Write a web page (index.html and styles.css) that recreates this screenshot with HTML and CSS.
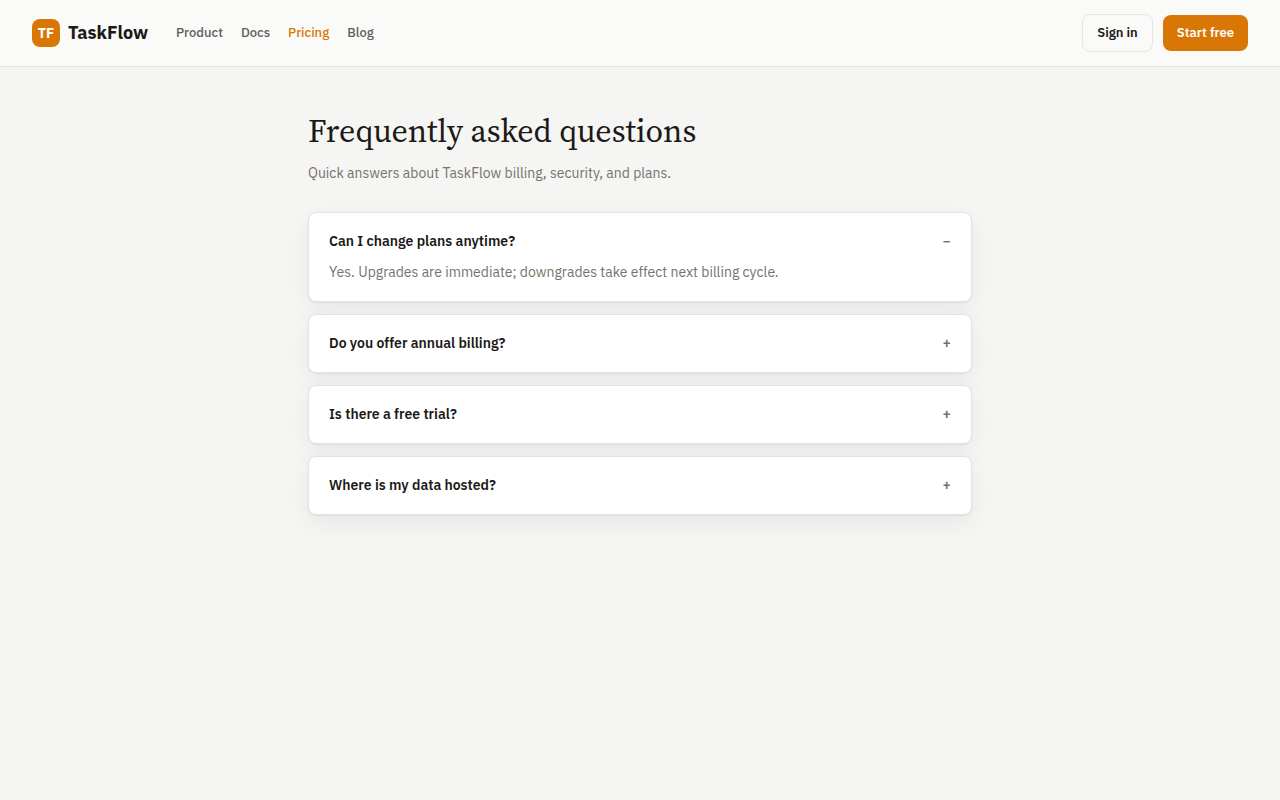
FILE: index.html
```html
<!DOCTYPE html>
<html lang="en">
<head>
    <meta charset="UTF-8">
    <meta name="viewport" content="width=device-width, initial-scale=1.0">
    <title>TaskFlow - Frequently asked questions</title>
    <link rel="stylesheet" href="styles.css">
</head>
<body>
<header class="topbar">
    <a href="#" class="brand">
        <span class="logo">TF</span>
        <span class="brand-name">TaskFlow</span>
    </a>
    <nav class="nav">
        <a href="#">Product</a>
        <a href="#">Docs</a>
        <a href="#" class="active">Pricing</a>
        <a href="#">Blog</a>
    </nav>
    <div class="actions">
        <button type="button" class="btn btn-outline">Sign in</button>
        <button type="button" class="btn btn-primary">Start free</button>
    </div>
</header>

<main class="container">
    <h1>Frequently asked questions</h1>
    <p class="subtitle">Quick answers about TaskFlow billing, security, and plans.</p>

    <!-- Questions, the first one starts open -->
    <div class="faq">
        <details class="faq-item" open>
            <summary>Can I change plans anytime?</summary>
            <p>Yes. Upgrades are immediate; downgrades take effect next billing cycle.</p>
        </details>
        <details class="faq-item">
            <summary>Do you offer annual billing?</summary>
            <p>Yes.</p>
        </details>
        <details class="faq-item">
            <summary>Is there a free trial?</summary>
            <p>Yes.</p>
        </details>
        <details class="faq-item">
            <summary>Where is my data hosted?</summary>
            <p>In the cloud.</p>
        </details>
    </div>
</main>
</body>
</html>
```
FILE: styles.css
```css
* {
    box-sizing: border-box;
}

body {
    font-family: "IBM Plex Sans", Roboto, sans-serif;
    margin: 0;
    background: #f5f5f4;
    color: #1c1917;
    font-size: 14px;
    line-height: 21px;
}

a {
    text-decoration: none;
    color: inherit;
}

/* Top bar */
.topbar {
    display: flex;
    align-items: center;
    gap: 28px;
    padding: 14px 32px;
    background: #fafaf9;
    border-bottom: 1px solid #e3e3e1;
}

.brand {
    display: flex;
    align-items: center;
    gap: 8px;
}

.logo {
    display: flex;
    align-items: center;
    justify-content: center;
    width: 28px;
    height: 28px;
    border-radius: 8px;
    background: #d97706;
    color: #fff;
    font-weight: 700;
}

.brand-name {
    font-size: 18px;
    font-weight: 700;
    line-height: 20px;
}

.nav {
    display: flex;
    gap: 18px;
    font-size: 13px;
    font-weight: 500;
    line-height: 20px;
    color: #5f5e5b;
}

.nav .active {
    color: #d97706;
}

.actions {
    display: flex;
    align-items: center;
    gap: 10px;
    margin-left: auto;
}

.btn {
    padding: 10px 14px;
    border: none;
    border-radius: 8px;
    font-family: inherit;
    font-size: 13px;
    font-weight: 600;
    line-height: 16px;
    cursor: pointer;
}

.btn-outline {
    border: 1px solid #e5e5e3;
    background: transparent;
    color: #1c1917;
}

.btn-primary {
    background: #d97706;
    color: #fff;
}

/* FAQ */
.container {
    max-width: 712px;
    margin: 0 auto;
    padding: 40px 24px;
}

h1 {
    margin: 0 0 8px;
    font-family: "Source Serif 4", "Liberation Serif", serif;
    font-size: 32px;
    font-weight: 400;
    line-height: 48px;
}

.subtitle {
    margin: 0 0 28px;
    color: #78716c;
}

.faq {
    display: flex;
    flex-direction: column;
    gap: 12px;
}

.faq-item {
    padding: 18px 20px;
    background: #fff;
    border: 1px solid #e3e3e1;
    border-radius: 8px;
    box-shadow: 0 1px 2px rgba(28, 25, 23, 0.06), 0 8px 24px rgba(28, 25, 23, 0.06);
}

.faq-item summary {
    display: flex;
    justify-content: space-between;
    font-weight: 600;
    cursor: pointer;
    list-style: none;
}

.faq-item summary::after {
    content: "+";
    color: #78716c;
}

.faq-item[open] summary::after {
    content: "−";
}

.faq-item p {
    margin: 10px 0 0;
    color: #78716c;
}
```
